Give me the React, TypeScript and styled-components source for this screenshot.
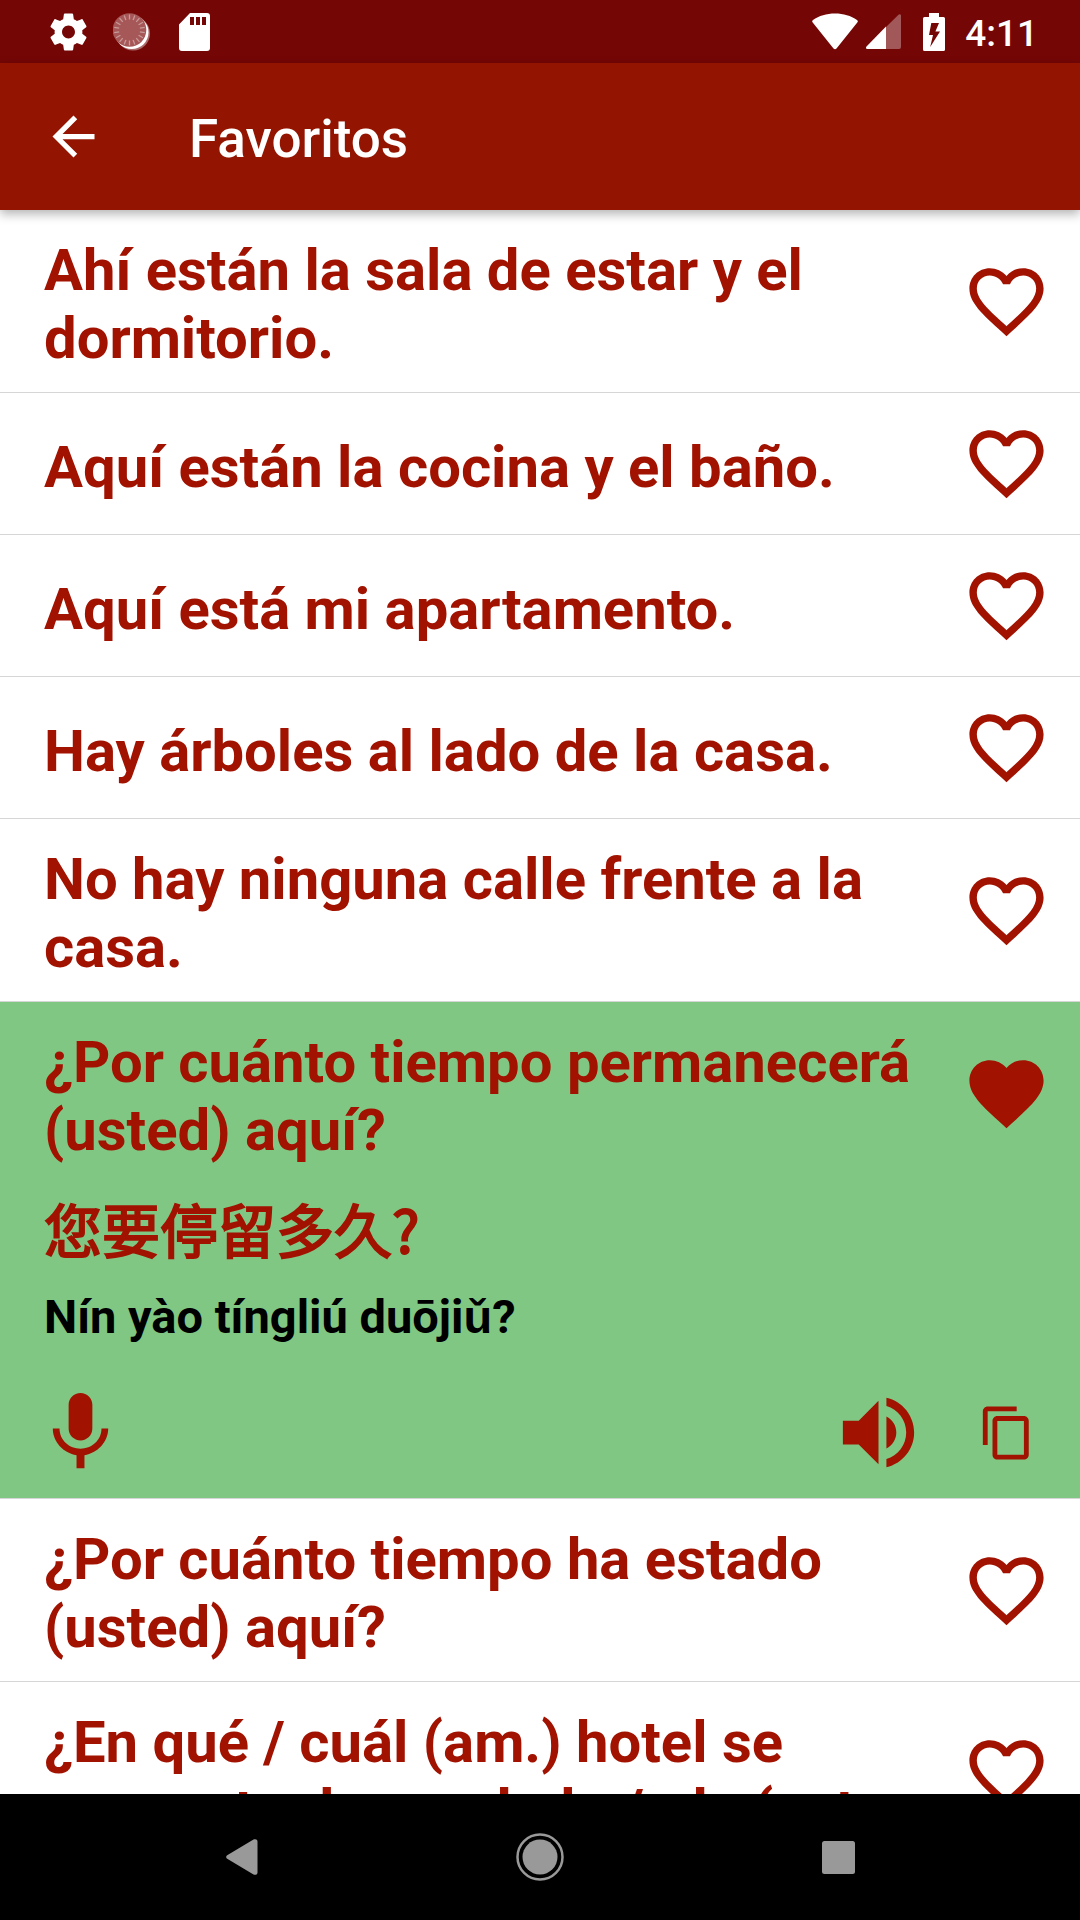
import React, { useState } from 'react';
import styled, { createGlobalStyle } from 'styled-components';

const ACCENT = '#a11200';

const GlobalStyle = createGlobalStyle`
  * { box-sizing: border-box; }
  body {
    margin: 0;
    background: #fff;
    font-family: Roboto, "Liberation Sans", "Noto Sans CJK SC", sans-serif;
  }
  button { border: 0; padding: 0; margin: 0; background: none; color: inherit; font: inherit; cursor: pointer; }
  svg { display: block; flex: none; }
`;

const Screen = styled.div`
  display: flex;
  flex-direction: column;
  height: 100vh;
  overflow: hidden;
`;

const StatusBar = styled.div`
  flex: none;
  display: flex;
  align-items: center;
  justify-content: space-between;
  height: 63px;
  padding: 0 42px 0 50px;
  background: #750606;
  color: #fff;
`;

const StatusGroup = styled.div<{ $gap: number }>`
  display: flex;
  align-items: center;
  gap: ${(p) => p.$gap}px;
`;

const SystemIcons = styled.div`
  display: flex;
  align-items: center;
  gap: 8px;
  padding-right: 2px;
`;

const Clock = styled.time`
  font-size: 37px;
  font-weight: 500;
  line-height: 44px;
  padding-top: 4px;
`;

const AppBar = styled.header`
  flex: none;
  position: relative;
  z-index: 1;
  display: flex;
  align-items: center;
  gap: 84px;
  height: 147px;
  padding: 0 42px;
  background: #931400;
  color: #fff;
  box-shadow: 0 4px 10px rgba(0, 0, 0, 0.3);
`;

const Title = styled.h1`
  margin: 0;
  padding-top: 4px;
  font-size: 53px;
  font-weight: 500;
  line-height: 62px;
`;

const PhraseList = styled.ul`
  flex: 1;
  min-height: 0;
  margin: 0;
  padding: 0;
  overflow: hidden;
  list-style: none;
  color: ${ACCENT};
`;

const PhraseItem = styled.li<{ $open: boolean }>`
  border-bottom: 1px solid #d6d6d6;
  background: ${(p) => (p.$open ? '#81c784' : '#fff')};
`;

const PhraseHead = styled.div`
  display: flex;
  align-items: center;
`;

const PhraseText = styled.p`
  flex: 1;
  margin: 0;
  padding: 26px 0 20px 44px;
  font-size: 58px;
  font-weight: 700;
  line-height: 68px;
`;

const HeartButton = styled.button`
  flex: none;
  padding: 26px 29px 26px 0;
`;

const Translation = styled.p`
  margin: 0;
  padding: 10px 44px 0;
  font-family: "Noto Sans CJK SC", sans-serif;
  font-size: 58px;
  font-weight: 400;
  line-height: 68px;
  -webkit-text-stroke: 2px currentColor;
`;

const Pinyin = styled.p`
  margin: 0;
  padding: 27px 44px 40px;
  color: #000;
  font-size: 47px;
  font-weight: 700;
  line-height: 56px;
`;

const Actions = styled.div`
  display: flex;
  align-items: center;
  justify-content: space-between;
  padding: 0 44px 18px 33px;
`;

const ActionGroup = styled.div`
  display: flex;
  align-items: center;
  gap: 52px;
`;

const NavBar = styled.nav`
  flex: none;
  display: flex;
  justify-content: center;
  height: 126px;
  background: #000;
  color: #999;
`;

const NavButton = styled.button`
  flex: 0 1 298px;
  display: flex;
  align-items: center;
  justify-content: center;
`;

const HEART =
  'M12 21.35l-1.45-1.32C5.4 15.36 2 12.28 2 8.5 2 5.42 4.42 3 7.5 3c1.74 0 3.41.81 4.5 2.09C13.09 3.81 14.76 3 16.5 3 19.58 3 22 5.42 22 8.5c0 3.78-3.4 6.86-8.55 11.54L12 21.35z';
const HEART_BORDER =
  'M16.5 3c-1.74 0-3.41.81-4.5 2.09C10.91 3.81 9.24 3 7.5 3 4.42 3 2 5.42 2 8.5c0 3.78 3.4 6.86 8.55 11.54L12 21.35l1.45-1.32C18.6 15.36 22 12.28 22 8.5 22 5.42 19.58 3 16.5 3zm-4.4 15.55l-.1.1-.1-.1C7.14 14.24 4 11.39 4 8.5 4 6.5 5.5 5 7.5 5c1.54 0 3.04.99 3.57 2.36h1.87C13.46 5.99 14.96 5 16.5 5c2 0 3.5 1.5 3.5 3.5 0 2.89-3.14 5.74-7.9 10.05z';
const MIC =
  'M12 14c1.66 0 2.99-1.34 2.99-3L15 5c0-1.66-1.34-3-3-3S9 3.34 9 5v6c0 1.66 1.34 3 3 3zm5.3-3c0 3-2.54 5.1-5.3 5.1S6.7 14 6.7 11H5c0 3.41 2.72 6.23 6 6.72V21h2v-3.28c3.28-.48 6-3.3 6-6.72h-1.7z';
const SPEAKER =
  'M3 9v6h4l5 5V4L7 9H3zm13.5 3c0-1.77-1.02-3.29-2.5-4.03v8.05c1.48-.73 2.5-2.25 2.5-4.02zM14 3.23v2.06c2.89.86 5 3.54 5 6.71s-2.11 5.85-5 6.71v2.06c4.01-.91 7-4.49 7-8.77s-2.99-7.86-7-8.77z';
const COPY =
  'M16 1H4c-1.1 0-2 .9-2 2v14h2V3h12V1zm3 4H8c-1.1 0-2 .9-2 2v14c0 1.1.9 2 2 2h11c1.1 0 2-.9 2-2V7c0-1.1-.9-2-2-2zm0 16H8V7h11v14z';
const ARROW = 'M20 11H7.83l5.59-5.59L12 4l-8 8 8 8 1.41-1.41L7.83 13H20v-2z';
const GEAR =
  'M19.43 12.98c.04-.32.07-.64.07-.98s-.03-.66-.07-.98l2.11-1.65c.19-.15.24-.42.12-.64l-2-3.46c-.12-.22-.39-.3-.61-.22l-2.49 1c-.52-.4-1.08-.73-1.69-.98l-.38-2.65C14.46 2.18 14.25 2 14 2h-4c-.25 0-.46.18-.49.42l-.38 2.65c-.61.25-1.17.59-1.69.98l-2.49-1c-.23-.09-.49 0-.61.22l-2 3.46c-.13.22-.07.49.12.64l2.11 1.65c-.04.32-.07.65-.07.98s.03.66.07.98l-2.11 1.65c-.19.15-.24.42-.12.64l2 3.46c.12.22.39.3.61.22l2.49-1c.52.4 1.08.73 1.69.98l.38 2.65c.03.24.24.42.49.42h4c.25 0 .46-.18.49-.42l.38-2.65c.61-.25 1.17-.59 1.69-.98l2.49 1c.23.09.49 0 .61-.22l2-3.46c.12-.22.07-.49-.12-.64l-2.11-1.65zM12 15.5c-1.93 0-3.5-1.57-3.5-3.5s1.57-3.5 3.5-3.5 3.5 1.57 3.5 3.5-1.57 3.5-3.5 3.5z';

function Icon({ path, size }: { path: string; size: number }) {
  return (
    <svg width={size} height={size} viewBox="0 0 24 24" fill="currentColor" aria-hidden="true">
      <path d={path} />
    </svg>
  );
}

function GearIcon() {
  return (
    <svg width="37" height="38" viewBox="2 2 20 20" fill="currentColor" aria-hidden="true">
      <path d={GEAR} />
    </svg>
  );
}

function SpinnerIcon() {
  const ticks = Array.from({ length: 18 }, (_, i) => i * 20);
  return (
    <svg width="40" height="38" viewBox="0 0 40 38" aria-hidden="true">
      <circle cx="20" cy="20.500" r="17" fill="#fff" fillOpacity="0.4" />
      <circle cx="18.700" cy="19.300" r="16.800" fill="#fff" />
      <circle cx="16.500" cy="17" r="16.800" fill="#a65757" />
      {ticks.map((a) => (
        <line
          key={a}
          x1="16.500"
          y1="1.500"
          x2="16.500"
          y2="6.500"
          stroke="#c99a9a"
          strokeWidth="1.300"
          transform={`rotate(${a} 16.500 17)`}
        />
      ))}
    </svg>
  );
}

function SdCardIcon() {
  return (
    <svg width="31" height="38" viewBox="0 0 31 38" fill="currentColor" aria-hidden="true">
      <path
        fillRule="evenodd"
        d="M11 0h17a3 3 0 0 1 3 3v32a3 3 0 0 1-3 3H3a3 3 0 0 1-3-3V11.500zM11 4v8h4V4zM17 4v8h4V4zM23 4v8h4V4z"
      />
    </svg>
  );
}

function WifiIcon() {
  return (
    <svg width="46" height="37" viewBox="0 0 46 37" fill="currentColor" aria-hidden="true">
      <path d="M.7 9.500C-.2 8.500 0 7.600 1 6.900 7 2.800 14.500.5 23 .5s16 2.300 22 6.400c1 .7 1.200 1.600.3 2.600L24.500 35.500c-1 1.100-2 1.100-3 0z" />
    </svg>
  );
}

function SignalIcon() {
  return (
    <svg width="35" height="35" viewBox="0 0 35 35" fill="currentColor" aria-hidden="true">
      <path d="M20 13L32.500.8C33.500-.2 35 .3 35 1.800V33a2 2 0 0 1-2 2H20z" fillOpacity="0.33" />
      <path d="M20 12.500V35H1.500C0 35-.4 33.500.5 32.500z" />
    </svg>
  );
}

function BatteryIcon() {
  return (
    <svg width="22" height="38" viewBox="0 0 22 38" fill="currentColor" aria-hidden="true">
      <path
        fillRule="evenodd"
        d="M6 0h10v4h4.500A1.500 1.500 0 0 1 22 5.500v31a1.500 1.500 0 0 1-1.500 1.500h-19A1.500 1.500 0 0 1 0 36.500v-31A1.500 1.500 0 0 1 1.500 4H6zM8.300 10L6 22h4L7.200 34 17 18.500h-4.600L16 10z"
      />
    </svg>
  );
}

interface Phrase {
  text: string;
  translation?: string;
  pinyin?: string;
}

const PHRASES: Phrase[] = [
  { text: 'Ahí están la sala de estar y el dormitorio.' },
  { text: 'Aquí están la cocina y el baño.' },
  { text: 'Aquí está mi apartamento.' },
  { text: 'Hay árboles al lado de la casa.' },
  { text: 'No hay ninguna calle frente a la casa.' },
  {
    text: '¿Por cuánto tiempo permanecerá (usted) aquí?',
    translation: '您要停留多久?',
    pinyin: 'Nín yào tíngliú duōjiǔ?',
  },
  { text: '¿Por cuánto tiempo ha estado (usted) aquí?' },
  { text: '¿En qué / cuál (am.) hotel se encuentra hospedado /ada (ust.' },
];

function PhraseRow({ phrase }: { phrase: Phrase }) {
  const open = Boolean(phrase.translation);
  const [marked, setMarked] = useState(open);
  return (
    <PhraseItem $open={open}>
      <PhraseHead>
        <PhraseText>{phrase.text}</PhraseText>
        <HeartButton type="button" aria-label="Favorito" aria-pressed={marked} onClick={() => setMarked(!marked)}>
          <Icon path={marked ? HEART : HEART_BORDER} size={89} />
        </HeartButton>
      </PhraseHead>
      {open && (
        <>
          <Translation lang="zh-CN">{phrase.translation}</Translation>
          <Pinyin>{phrase.pinyin}</Pinyin>
          <Actions>
            <button type="button" aria-label="Grabar">
              <Icon path={MIC} size={95} />
            </button>
            <ActionGroup>
              <button type="button" aria-label="Escuchar">
                <Icon path={SPEAKER} size={95} />
              </button>
              <button type="button" aria-label="Copiar">
                <Icon path={COPY} size={58} />
              </button>
            </ActionGroup>
          </Actions>
        </>
      )}
    </PhraseItem>
  );
}

export default function App() {
  return (
    <Screen>
      <GlobalStyle />
      <StatusBar>
        <StatusGroup $gap={26}>
          <GearIcon />
          <SpinnerIcon />
          <SdCardIcon />
        </StatusGroup>
        <StatusGroup $gap={20}>
          <SystemIcons>
            <WifiIcon />
            <SignalIcon />
          </SystemIcons>
          <BatteryIcon />
          <Clock>4:11</Clock>
        </StatusGroup>
      </StatusBar>
      <AppBar>
        <button type="button" aria-label="Atrás">
          <Icon path={ARROW} size={63} />
        </button>
        <Title>Favoritos</Title>
      </AppBar>
      <PhraseList>
        {PHRASES.map((p) => (
          <PhraseRow key={p.text} phrase={p} />
        ))}
      </PhraseList>
      <NavBar>
        <NavButton type="button" aria-label="Volver">
          <svg width="32" height="36" viewBox="0 0 32 36" fill="currentColor" aria-hidden="true">
            <path d="M1.200 16.300L27.500.6C29.500-.4 31.500.5 31.500 2.500v31c0 2-2 2.900-4 1.900L1.200 19.700c-1.400-.9-1.400-2.500 0-3.400z" />
          </svg>
        </NavButton>
        <NavButton type="button" aria-label="Inicio">
          <svg width="48" height="48" viewBox="0 0 48 48" aria-hidden="true">
            <circle cx="24" cy="24" r="22.500" fill="none" stroke="currentColor" strokeWidth="2.500" />
            <circle cx="24" cy="24" r="17.500" fill="currentColor" />
          </svg>
        </NavButton>
        <NavButton type="button" aria-label="Recientes">
          <svg width="33" height="33" viewBox="0 0 33 33" fill="currentColor" aria-hidden="true">
            <rect width="33" height="33" rx="2.500" />
          </svg>
        </NavButton>
      </NavBar>
    </Screen>
  );
}
